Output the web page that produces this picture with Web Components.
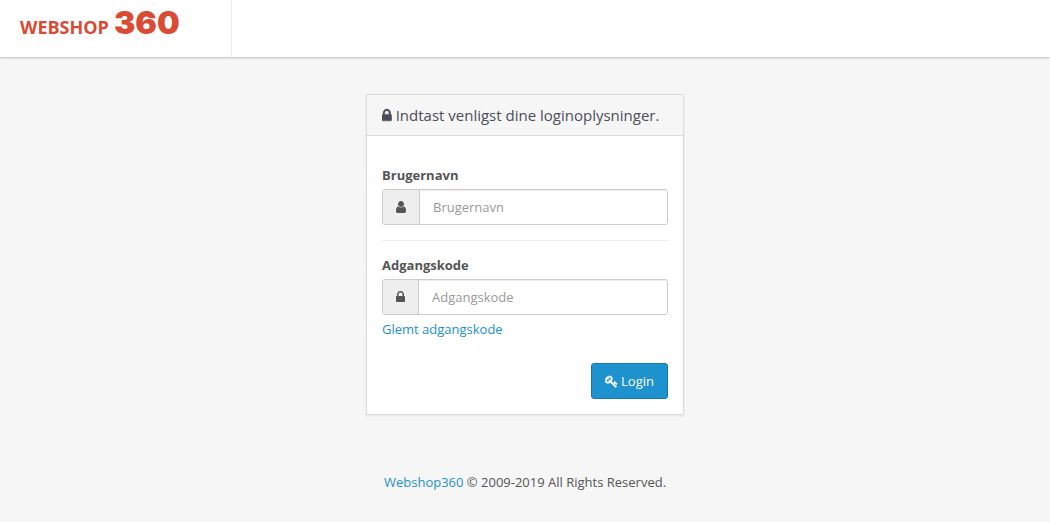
<!DOCTYPE html>
<html lang="da">
<head>
<meta charset="utf-8">
<title>Webshop360</title>
<style>
body { margin: 0; background: #f6f6f6; color: #555; font: 13px/18px "Open Sans", sans-serif; }
</style>
</head>
<body>
<login-page></login-page>
<script>
const define = (name, html) => customElements.define(name, class extends HTMLElement {
  connectedCallback() {
    if (this.shadowRoot) return;
    this.attachShadow({ mode: 'open' }).innerHTML =
      '<style>*{box-sizing:border-box}a{color:#1e91cf;text-decoration:none}</style>' +
      (typeof html === 'function' ? html(this) : html);
  }
});

const icons = {
  lock: ['320 0 1152 1792', 'M640 768h512v-192q0-106-75-181t-181-75-181 75-75 181v192zm832 96v576q0 40-28 68t-68 28h-960q-40 0-68-28t-28-68v-576q0-40 28-68t68-28h32v-192q0-184 132-316t316-132 316 132 132 316v192h32q40 0 68 28t28 68z'],
  user: ['256 0 1280 1792', 'M1536 1399q0 109-62.5 187t-150.5 78h-854q-88 0-150.5-78t-62.5-187q0-85 8.5-160.5t31.5-152 58.5-131 94-89 134.5-34.5q131 128 313 128t313-128q76 0 134.5 34.5t94 89 58.5 131 31.5 152 8.5 160.5zm-256-887q0 159-112.5 271.5t-271.5 112.5-271.5-112.5-112.5-271.5 112.5-271.5 271.5-112.5 271.5 112.5 112.5 271.5z'],
  key: ['0 0 1792 1792', 'M832 512q0-80-56-136t-136-56-136 56-56 136q0 42 19 83-41-19-83-19-80 0-136 56t-56 136 56 136 136 56 136-56 56-136q0-42-19-83 41 19 83 19 80 0 136-56t56-136zm851 704q0 17-49 66t-66 49q-9 0-28.5-16t-36.5-33-38.5-40-24.5-26l-96 96 220 220q28 28 28 68 0 42-39 81t-81 39q-40 0-68-28l-671-671q-176 131-365 131-163 0-265.5-102.5t-102.5-265.5q0-160 95-313t248-248 313-95q163 0 265.5 102.5t102.5 265.5q0 189-131 365l355 355 96-96q-3-3-26-24.5t-40-38.5-33-36.5-16-28.5q0-17 49-66t66-49q13 0 23 10 6 6 46 44.5t82 79.5 86.5 86 73 78 28.5 41z']
};

define('ui-icon', el => {
  const [box, path] = icons[el.getAttribute('name')];
  return `<style>:host{display:block;flex:none}
    svg{display:block;height:var(--icon-size,14px);width:auto;fill:currentColor;stroke:currentColor;stroke-width:var(--icon-stroke,0)}</style>
    <svg viewBox="${box}" aria-hidden="true"><path d="${path}"/></svg>`;
});

define('site-header', `
  <style>
    :host{display:flex;height:57px;background:#fff;box-shadow:0 1px 2px rgba(0,0,0,.22)}
    .brand{width:232px;padding:6px 20px;border-right:1px solid #eee}
    a{display:flex;align-items:baseline;gap:5px;color:#db4a33;font-size:18px;font-weight:700;line-height:34px}
    b{font:900 32px/34px Inter,sans-serif}
  </style>
  <div class="brand"><a href="#"><span>WEBSHOP</span><b>360</b></a></div>`);

define('login-panel', `
  <style>
    :host{display:block;background:#fff;border:1px solid #dcdcdc;box-shadow:0 1px 2px rgba(0,0,0,.08)}
    h1{display:flex;align-items:center;gap:4px;margin:0;padding:10px 15px;border-bottom:1px solid #dcdcdc;
      background:#f6f6f6;color:#4c4d5a;font-size:15px;line-height:20px;font-weight:400;--icon-size:15px;--icon-stroke:60}
    .body{padding:15px}
  </style>
  <h1><ui-icon name="lock"></ui-icon><slot name="title"></slot></h1>
  <div class="body"><slot></slot></div>`);

define('form-field', el => {
  const label = el.getAttribute('label');
  return `
  <style>
    :host{display:block;padding:15px 0}
    :host(:not(:first-of-type)){border-top:1px solid #ededed}
    label{display:block;margin-bottom:5px;font-weight:700}
    .group{display:flex;height:36px;border:1px solid #ccc;border-radius:3px;overflow:hidden}
    .addon{display:flex;align-items:center;padding:0 13px;background:#eee;border-right:1px solid #ccc}
    input{flex:1;min-width:0;border:0;padding:0 13px;font:inherit;color:inherit;background:#fff;outline:0;
      box-shadow:inset 0 1px 1px rgba(0,0,0,.075)}
    input::placeholder{color:#999;opacity:1}
    ::slotted(a){display:block;margin-top:5px;color:#1e91cf;text-decoration:none}
  </style>
  <label for="field">${label}</label>
  <div class="group"><span class="addon"><ui-icon name="${el.getAttribute('icon')}"></ui-icon></span>
    <input id="field" type="${el.getAttribute('type')}" placeholder="${label}"></div>
  <slot></slot>`;
});

define('primary-button', `
  <style>
    :host{display:block;--icon-size:13px;--icon-stroke:70}
    button{display:flex;align-items:center;gap:3px;height:36px;padding:0 13px;border:1px solid #1978ab;
      border-radius:3px;background:#1e91cf;color:#fff;font:inherit;cursor:pointer}
  </style>
  <button type="button"><ui-icon name="key"></ui-icon><slot></slot></button>`);

define('login-page', `
  <style>
    :host{display:block}
    main{padding:37px 15px 0}
    login-panel{max-width:318px;margin:0 auto}
    .actions{display:flex;justify-content:flex-end;padding-top:10px}
    footer{padding:58px 15px 31px;text-align:center}
  </style>
  <site-header></site-header>
  <main>
    <login-panel>
      <span slot="title">Indtast venligst dine loginoplysninger.</span>
      <form-field label="Brugernavn" icon="user" type="text"></form-field>
      <form-field label="Adgangskode" icon="lock" type="password"><a href="#">Glemt adgangskode</a></form-field>
      <div class="actions"><primary-button>Login</primary-button></div>
    </login-panel>
  </main>
  <footer><a href="#">Webshop360</a> © 2009-2019 All Rights Reserved.</footer>`);
</script>
</body>
</html>
